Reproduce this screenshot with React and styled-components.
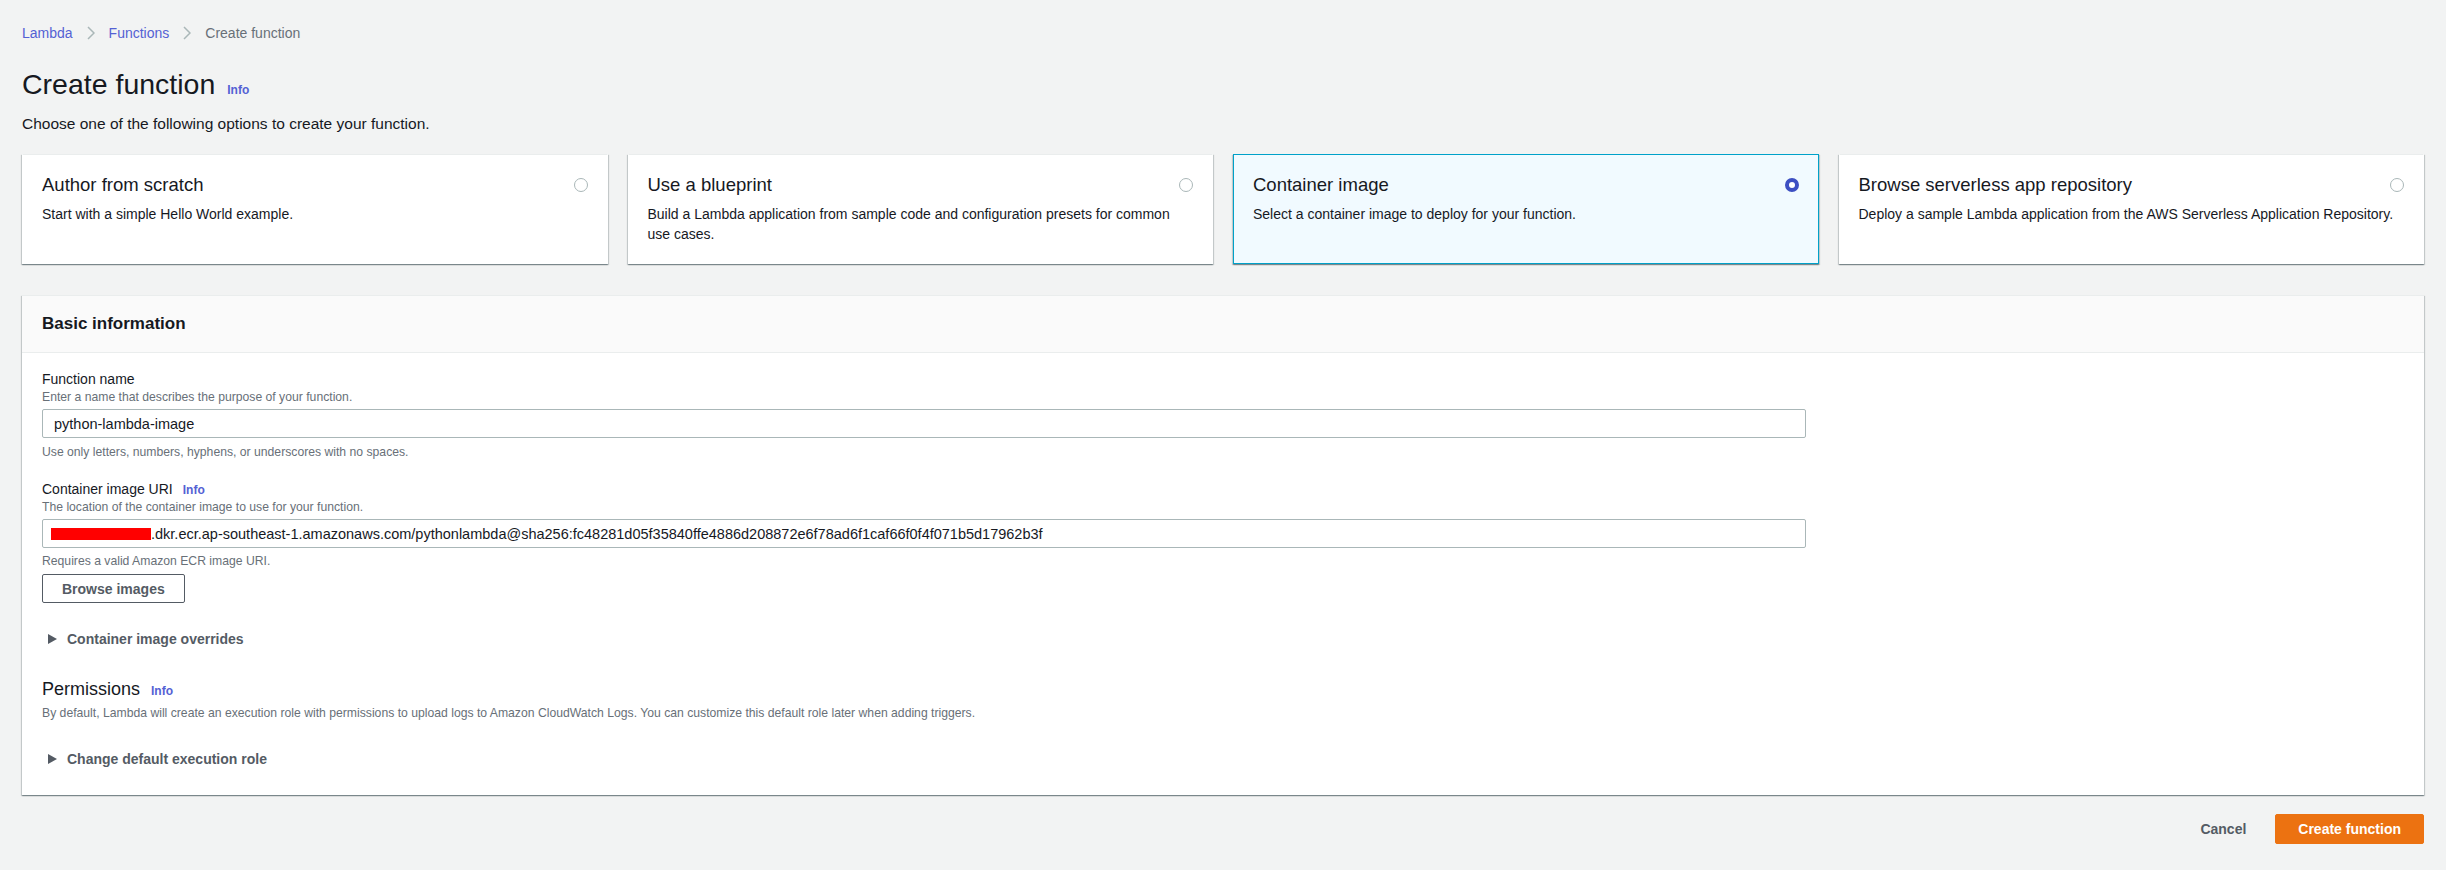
import React from "react";
import styled, { createGlobalStyle } from "styled-components";

const GlobalStyle = createGlobalStyle`
  html, body { margin: 0; padding: 0; }
  body {
    background: #f2f3f3;
    font-family: "Liberation Sans", Arial, sans-serif;
    color: #16191f;
  }
  * { box-sizing: border-box; }
`;

const LINK = "#5461d4";

const Page = styled.div`
  padding: 23px 22px 0 22px;
`;

const Breadcrumbs = styled.nav`
  display: flex;
  align-items: center;
  gap: 14px;
  font-size: 14px;
  line-height: 20px;
`;

const Crumb = styled.span`
  color: ${(p) => (p.$current ? "#687078" : LINK)};
`;

const TitleRow = styled.div`
  margin-top: 23px;
  display: flex;
  align-items: baseline;
  gap: 12px;
`;

const H1 = styled.h1`
  margin: 0;
  font-size: 28.5px;
  line-height: 36px;
  font-weight: 400;
`;

const InfoLink = styled.span`
  color: ${LINK};
  font-size: 12px;
  font-weight: 700;
`;

const Subtitle = styled.p`
  margin: 11px 0 0;
  font-size: 15.5px;
  line-height: 22px;
`;

const Tiles = styled.div`
  margin-top: 19px;
  display: grid;
  grid-template-columns: repeat(4, 1fr);
  gap: 20px;
`;

const shadow = `
  box-shadow: 0 1px 1px 0 rgba(0, 28, 36, 0.3), 1px 1px 1px 0 rgba(0, 28, 36, 0.15),
    -1px 1px 1px 0 rgba(0, 28, 36, 0.15);
`;

const Tile = styled.div`
  background: ${(p) => (p.$selected ? "#f1faff" : "#ffffff")};
  border: 1px solid ${(p) => (p.$selected ? "#00a1c9" : "transparent")};
  border-top-color: ${(p) => (p.$selected ? "#00a1c9" : "#eaeded")};
  ${shadow}
  padding: 19px;
`;

const TileHead = styled.div`
  display: flex;
  align-items: center;
  justify-content: space-between;
`;

const TileTitle = styled.div`
  font-size: 18.5px;
  line-height: 22px;
`;

const Radio = styled.span`
  width: 14px;
  height: 14px;
  border-radius: 50%;
  flex: none;
  background: #fff;
  border: ${(p) => (p.$checked ? "4.5px solid #3d4fc2" : "1.5px solid #aab7b8")};
`;

const TileDesc = styled.div`
  margin-top: 8px;
  font-size: 14px;
  line-height: 20px;
`;

const Panel = styled.section`
  margin-top: 31px;
  background: #fff;
  border-top: 1px solid #eaeded;
  ${shadow}
`;

const PanelHeader = styled.div`
  height: 57px;
  background: #fafafa;
  border-bottom: 1px solid #eaeded;
  padding: 0 20px;
  display: flex;
  align-items: center;
`;

const PanelTitle = styled.h2`
  margin: 0;
  font-size: 17px;
  font-weight: 700;
`;

const PanelBody = styled.div`
  padding: 16px 20px 26px;
`;

const Field = styled.div`
  margin-top: ${(p) => p.$mt || 0}px;
`;

const LabelRow = styled.div`
  display: flex;
  align-items: baseline;
  gap: 10px;
`;

const Label = styled.label`
  font-size: 14px;
  line-height: 20px;
  color: #16191f;
`;

const Hint = styled.div`
  font-size: 12.2px;
  line-height: 16px;
  color: #687078;
  margin-top: ${(p) => p.$mt || 0}px;
`;

const InputBox = styled.div`
  margin-top: 4px;
  max-width: 1764px;
  height: 29px;
  border: 1px solid #aab7b8;
  border-radius: 2px;
  background: #fff;
  padding: 0 11px;
  display: flex;
  align-items: center;
  font-size: 14.5px;
  white-space: nowrap;
  overflow: hidden;
`;

const Redaction = styled.span`
  display: inline-block;
  width: 100px;
  height: 12px;
  margin-left: -3px;
  background: #ff0000;
  flex: none;
`;

const OutlineButton = styled.button`
  margin-top: 5px;
  height: 29px;
  padding: 0 19px;
  border: 1px solid #545b64;
  border-radius: 2px;
  background: #fff;
  color: #545b64;
  font-family: inherit;
  font-size: 14px;
  font-weight: 700;
`;

const Expander = styled.div`
  margin-top: ${(p) => p.$mt}px;
  display: flex;
  align-items: center;
  gap: 10px;
  padding-left: 6px;
  font-size: 14px;
  line-height: 20px;
  font-weight: 700;
  color: #545b64;
`;

const SectionHeading = styled.div`
  margin-top: 27px;
  display: flex;
  align-items: baseline;
  gap: 11px;
`;

const H3 = styled.h3`
  margin: 0;
  font-size: 18px;
  line-height: 26px;
  font-weight: 400;
`;

const Footer = styled.div`
  margin-top: 19px;
  display: flex;
  justify-content: flex-end;
  align-items: center;
  gap: 10px;
`;

const LinkButton = styled.button`
  height: 30px;
  padding: 0 19px;
  border: none;
  background: transparent;
  color: #545b64;
  font-family: inherit;
  font-size: 14px;
  font-weight: 700;
`;

const PrimaryButton = styled.button`
  height: 30px;
  padding: 0 22px;
  border: 1px solid #ec7211;
  border-radius: 2px;
  background: #ec7211;
  color: #fff;
  font-family: inherit;
  font-size: 14px;
  font-weight: 700;
`;

const Chevron = () => (
  <svg width="8" height="14" viewBox="0 0 8 14" fill="none">
    <path d="M1 1 L7 7 L1 13" stroke="#aab7b8" strokeWidth="1.5" />
  </svg>
);

const Caret = () => (
  <svg width="9" height="10" viewBox="0 0 9 10">
    <path d="M0 0 L9 5 L0 10 Z" fill="#545b64" />
  </svg>
);

const tiles = [
  { title: "Author from scratch", desc: "Start with a simple Hello World example." },
  {
    title: "Use a blueprint",
    desc: "Build a Lambda application from sample code and configuration presets for common use cases.",
  },
  { title: "Container image", desc: "Select a container image to deploy for your function.", selected: true },
  {
    title: "Browse serverless app repository",
    desc: "Deploy a sample Lambda application from the AWS Serverless Application Repository.",
  },
];

export default function App() {
  return (
    <>
      <GlobalStyle />
      <Page>
        <Breadcrumbs>
          <Crumb>Lambda</Crumb>
          <Chevron />
          <Crumb>Functions</Crumb>
          <Chevron />
          <Crumb $current>Create function</Crumb>
        </Breadcrumbs>

        <TitleRow>
          <H1>Create function</H1>
          <InfoLink>Info</InfoLink>
        </TitleRow>
        <Subtitle>Choose one of the following options to create your function.</Subtitle>

        <Tiles>
          {tiles.map((t) => (
            <Tile key={t.title} $selected={t.selected}>
              <TileHead>
                <TileTitle>{t.title}</TileTitle>
                <Radio $checked={t.selected} />
              </TileHead>
              <TileDesc>{t.desc}</TileDesc>
            </Tile>
          ))}
        </Tiles>

        <Panel>
          <PanelHeader>
            <PanelTitle>Basic information</PanelTitle>
          </PanelHeader>
          <PanelBody>
            <Field>
              <Label>Function name</Label>
              <Hint>Enter a name that describes the purpose of your function.</Hint>
              <InputBox>python-lambda-image</InputBox>
              <Hint $mt={6}>Use only letters, numbers, hyphens, or underscores with no spaces.</Hint>
            </Field>

            <Field $mt={19}>
              <LabelRow>
                <Label>Container image URI</Label>
                <InfoLink>Info</InfoLink>
              </LabelRow>
              <Hint>The location of the container image to use for your function.</Hint>
              <InputBox>
                <Redaction />
                .dkr.ecr.ap-southeast-1.amazonaws.com/pythonlambda@sha256:fc48281d05f35840ffe4886d208872e6f78ad6f1caf66f0f4f071b5d17962b3f
              </InputBox>
              <Hint $mt={5}>Requires a valid Amazon ECR image URI.</Hint>
              <OutlineButton>Browse images</OutlineButton>
            </Field>

            <Expander $mt={26}>
              <Caret />
              Container image overrides
            </Expander>

            <SectionHeading>
              <H3>Permissions</H3>
              <InfoLink>Info</InfoLink>
            </SectionHeading>
            <Hint $mt={3}>
              By default, Lambda will create an execution role with permissions to upload logs to Amazon
              CloudWatch Logs. You can customize this default role later when adding triggers.
            </Hint>

            <Expander $mt={28}>
              <Caret />
              Change default execution role
            </Expander>
          </PanelBody>
        </Panel>

        <Footer>
          <LinkButton>Cancel</LinkButton>
          <PrimaryButton>Create function</PrimaryButton>
        </Footer>
      </Page>
    </>
  );
}
